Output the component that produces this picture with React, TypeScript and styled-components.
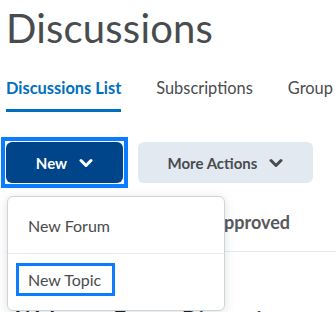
import styled, { createGlobalStyle } from 'styled-components'

const GlobalStyle = createGlobalStyle`
    html, body {
        margin: 0;
        padding: 0;
        background: #ffffff;
        font-family: Lato, "Noto Sans", sans-serif;
        overflow: hidden;
    }
`

const Page = styled.main`
    width: 336px;
    height: 312px;
    padding: 0 0 0 6px;
    box-sizing: border-box;
    overflow: hidden;
`

const Title = styled.h1`
    margin: 0;
    padding-top: 4px;
    font-size: 40px;
    line-height: 48px;
    font-weight: 400;
    color: #494c4e;
    letter-spacing: 0.2px;
`

const Tabs = styled.nav`
    display: flex;
    gap: 35px;
    margin-top: 24px;
    white-space: nowrap;
`

const Tab = styled.div<{ $active?: boolean }>`
    font-size: 16.4px;
    line-height: 24px;
    padding-bottom: 9px;
    font-weight: ${p => p.$active ? 700 : 400};
    color: ${p => p.$active ? '#006fbf' : '#494c4e'};
    border-bottom: 3px solid ${p => p.$active ? '#006fbf' : 'transparent'};
`

const Toolbar = styled.div`
    display: flex;
    align-items: center;
    gap: 15px;
    margin-top: 30px;
`

const MenuHolder = styled.div`
    position: relative;
`

const Button = styled.button<{ $primary?: boolean; $width: number }>`
    position: relative;
    display: flex;
    align-items: center;
    justify-content: center;
    gap: 12px;
    width: ${p => p.$width}px;
    height: 41px;
    border: none;
    border-radius: 6px;
    font-family: Lato, "Noto Sans", sans-serif;
    font-size: 15px;
    font-weight: 700;
    background: ${p => p.$primary ? '#004489' : '#e3e9f1'};
    color: ${p => p.$primary ? '#ffffff' : '#494c4e'};
    cursor: pointer;

    &::before {
        content: '';
        display: ${p => p.$primary ? 'block' : 'none'};
        position: absolute;
        inset: -5px;
        border: 4px solid #0b7cff;
    }
`

const Menu = styled.div`
    position: absolute;
    top: 54px;
    left: 1px;
    width: 218px;
    padding-bottom: 6px;
    background: #ffffff;
    border: 1px solid #cdd5dc;
    border-radius: 6px;
    box-shadow: 0 2px 12px rgba(0, 0, 0, 0.12);
    box-sizing: border-box;
    z-index: 2;
`

const MenuItem = styled.div`
    display: flex;
    align-items: center;
    height: 56px;
    padding-left: 11px;
    font-size: 16px;
    color: #494c4e;

    & + & {
        height: 50px;
        border-top: 1px solid #e3e9f1;
    }
`

const MenuLabel = styled.span<{ $focused?: boolean }>`
    padding: 4px 11px 4px 9px;
    outline: ${p => p.$focused ? '3px solid #0b7cff' : 'none'};
`

const TableHead = styled.div`
    display: flex;
    justify-content: flex-end;
    align-items: center;
    height: 58px;
    margin-top: 2px;
    padding: 8px 46px 0 0;
    border-bottom: 1px solid #e3e9f1;
    font-size: 18px;
    font-weight: 700;
    color: #565a5c;
`

const ForumName = styled.div`
    margin-top: 54px;
    padding-left: 10px;
    font-size: 22px;
    font-weight: 700;
    color: #202122;
    white-space: nowrap;
`

function Chevron({ color }: { color: string }) {
    return <svg width="14" height="10" viewBox="0 0 14 10">
        <path d="M2 2.5 L7 7.5 L12 2.5" fill="none" stroke={color} strokeWidth="3" strokeLinecap="round" strokeLinejoin="round" />
    </svg>
}

export default function App() {
    return <>
        <GlobalStyle />
        <Page>
            <Title>Discussions</Title>
            <Tabs>
                <Tab $active>Discussions List</Tab>
                <Tab>Subscriptions</Tab>
                <Tab>Group</Tab>
            </Tabs>
            <Toolbar>
                <MenuHolder>
                    <Button $primary $width={117}>
                        New <Chevron color="#ffffff" />
                    </Button>
                    <Menu>
                        <MenuItem><MenuLabel>New Forum</MenuLabel></MenuItem>
                        <MenuItem><MenuLabel $focused>New Topic</MenuLabel></MenuItem>
                    </Menu>
                </MenuHolder>
                <Button $width={175}>
                    More Actions <Chevron color="#494c4e" />
                </Button>
            </Toolbar>
            <TableHead>Unapproved</TableHead>
            <ForumName>Welcome Forum Discussions</ForumName>
        </Page>
    </>
}
